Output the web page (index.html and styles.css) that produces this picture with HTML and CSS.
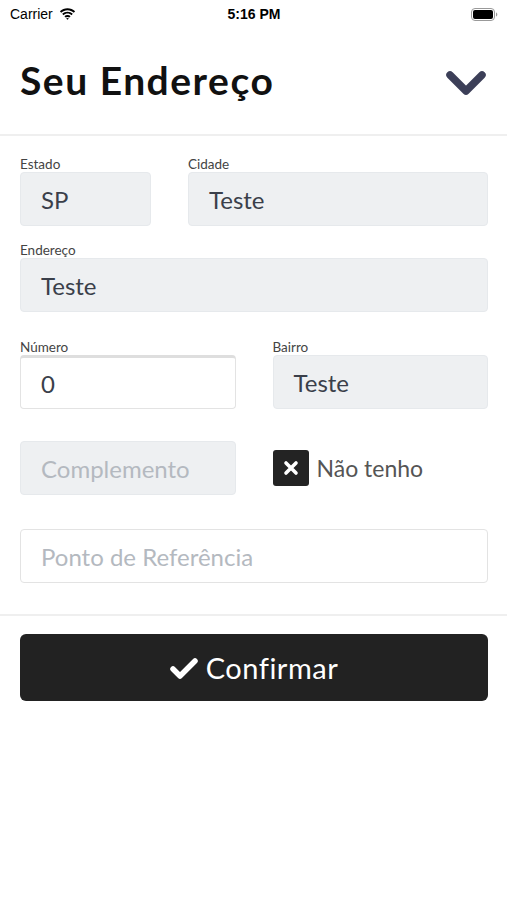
FILE: index.html
```html
<!DOCTYPE html>
<html lang="pt">
<head>
<meta charset="utf-8">
<link rel="stylesheet" href="styles.css">
</head>
<body>
<div class="status">
  <div class="st-left">Carrier
    <svg class="wifi" width="17" height="12" viewBox="0 0 17 12"><path d="M8.5 2.2c2.4 0 4.6.9 6.3 2.5l1.3-1.4C14.1 1.3 11.4.2 8.5.2S2.9 1.3.9 3.3l1.3 1.4C3.9 3.1 6.1 2.2 8.5 2.2z" fill="#000"/><path d="M8.5 5.6c1.5 0 2.9.6 4 1.6l1.3-1.4C12.4 4.5 10.5 3.7 8.5 3.7S4.6 4.5 3.2 5.8l1.3 1.4c1.1-1 2.5-1.6 4-1.6z" fill="#000"/><path d="M8.5 8.9c.7 0 1.3.3 1.8.7l1.3-1.4c-.8-.8-1.9-1.2-3.1-1.2s-2.3.4-3.1 1.2l1.3 1.4c.5-.4 1.1-.7 1.8-.7zM8.5 11.8l1.4-1.4c-.4-.3-.9-.5-1.4-.5s-1 .2-1.4.5z" fill="#000"/></svg>
  </div>
  <div class="st-time">5:16 PM</div>
  <div class="st-right">
    <svg width="27" height="13" viewBox="0 0 27 13"><rect x="0.5" y="0.5" width="23" height="12" rx="3.5" fill="none" stroke="#999"/><rect x="2" y="2" width="20" height="9" rx="2" fill="#000"/><path d="M25 4.5v4c.8-.3 1.3-1.1 1.3-2s-.5-1.7-1.3-2z" fill="#999"/></svg>
  </div>
</div>

<header class="head">
  <h1 class="title">Seu Endereço</h1>
  <svg class="chev" width="42" height="28" viewBox="0 0 42 28"><path d="M5 5 L21 21 L37 5" fill="none" stroke="#3c3f58" stroke-width="7.5" stroke-linecap="round" stroke-linejoin="round"/></svg>
</header>

<main class="form">
  <div class="row r-top">
    <div class="field f-estado">
      <label class="lbl">Estado</label>
      <div class="inp filled">SP</div>
    </div>
    <div class="field f-cidade">
      <label class="lbl">Cidade</label>
      <div class="inp filled">Teste</div>
    </div>
  </div>
  <div class="row r-end">
    <div class="field full">
      <label class="lbl">Endereço</label>
      <div class="inp filled">Teste</div>
    </div>
  </div>
  <div class="row halves r-num">
    <div class="field">
      <label class="lbl">Número</label>
      <div class="inp white active">0</div>
    </div>
    <div class="field">
      <label class="lbl">Bairro</label>
      <div class="inp filled">Teste</div>
    </div>
  </div>
  <div class="row halves r-comp">
    <div class="field">
      <div class="inp filled ph">Complemento</div>
    </div>
    <div class="check">
      <span class="box"><svg width="16" height="16" viewBox="0 0 16 16"><path d="M3 3 L13 13 M13 3 L3 13" stroke="#fff" stroke-width="3.6" stroke-linecap="round"/></svg></span>
      <span class="check-txt">Não tenho</span>
    </div>
  </div>
  <div class="row r-ponto">
    <div class="field full">
      <div class="inp white ph">Ponto de Referência</div>
    </div>
  </div>
</main>

<footer class="foot">
  <button class="btn">
    <svg width="28" height="22" viewBox="0 0 28 22"><path d="M3 12 L10 19 L25 4" fill="none" stroke="#fff" stroke-width="5.5" stroke-linecap="round" stroke-linejoin="round"/></svg>
    <span>Confirmar</span>
  </button>
</footer>
</body>
</html>
```

FILE: styles.css
```css
* { box-sizing: border-box; }
html, body { margin: 0; padding: 0; background: #fff; }
body { width: 507px; font-family: "Lato", "Open Sans", sans-serif; color: #222; }

.status {
  height: 28px;
  display: flex;
  align-items: center;
  justify-content: space-between;
  padding: 0 9px 0 10px;
  font-family: "Liberation Sans", "Inter", sans-serif;
  font-size: 14px;
  color: #000;
}
.st-left { display: flex; align-items: center; gap: 6px; width: 120px; }
.st-time { font-weight: 600; font-size: 14px; }
.st-right { width: 120px; display: flex; justify-content: flex-end; }

.head {
  height: 108px;
  display: flex;
  align-items: center;
  justify-content: space-between;
  padding: 0 20px 2px 20px;
  border-bottom: 2px solid #efefef;
}
.title {
  margin: 0;
  font-size: 39px;
  font-weight: 700;
  color: #111;
  letter-spacing: 1.5px;
}
.chev { margin-top: 8px; }

.form { padding: 22px 19px 31px 20px; border-bottom: 2px solid #efefef; }
.row { display: flex; gap: 37px; }
.r-end { margin-top: 18px; }
.r-num { margin-top: 29px; }
.r-comp { margin-top: 32px; align-items: center; }
.r-ponto { margin-top: 34px; }
.halves > * { flex: 1 1 0; }
.f-estado { width: 131px; flex: none; }
.f-cidade { flex: 1; }
.full { flex: 1; }

.lbl {
  display: block;
  font-size: 13.5px;
  color: #444;
  height: 14px;
  line-height: 12px;
  margin-bottom: 0;
}
.inp {
  height: 54px;
  border-radius: 4px;
  display: flex;
  align-items: center;
  padding-left: 20px;
  font-size: 24px;
  color: #3a3f4a;
}
.filled { background: #eef0f2; border: 1px solid #e6e9ec; }
.white { background: #fff; border: 1px solid #e3e3e3; }
.active { border-top: 3px solid #dedede; }
.ph { color: #b4b9c0; }

.check { display: flex; align-items: center; gap: 8px; }
.box {
  width: 36px; height: 36px;
  background: #232323;
  border-radius: 3px;
  display: flex; align-items: center; justify-content: center;
}
.check-txt { font-size: 23px; color: #555; }

.foot { padding: 18px 19px 0 20px; }
.btn {
  width: 100%;
  height: 67px;
  background: #222;
  border: none;
  border-radius: 6px;
  color: #fff;
  font-family: "Lato", "Open Sans", sans-serif;
  font-size: 29px;
  letter-spacing: 0.5px;
  display: flex;
  align-items: center;
  justify-content: center;
  gap: 8px;
  padding: 0;
}
```
